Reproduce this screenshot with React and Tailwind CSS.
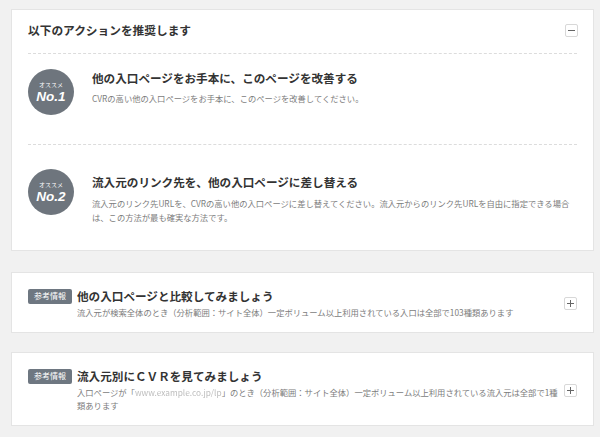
import React from "react";

const jp = { fontFamily: '"Noto Sans CJK JP", "Noto Sans", sans-serif' };

function Toggle({ sign }) {
  return (
    <div className="w-[13px] h-[13px] border border-[#d8d8d8] rounded-[2px] bg-white flex items-center justify-center shrink-0">
      {sign === "minus" ? (
        <div className="w-[7px] h-[1px] bg-[#666]" />
      ) : (
        <div className="relative w-[7px] h-[7px]">
          <div className="absolute left-0 top-[3px] w-[7px] h-[1px] bg-[#666]" />
          <div className="absolute top-0 left-[3px] h-[7px] w-[1px] bg-[#666]" />
        </div>
      )}
    </div>
  );
}

function Circle({ n }) {
  return (
    <div className="w-[46px] h-[46px] rounded-full bg-[#6e757d] flex flex-col items-center justify-center shrink-0 text-white">
      <div className="text-[6px] leading-[7px] mt-[1px]" style={jp}>オススメ</div>
      <div
        className="text-[13.5px] leading-[15px] font-bold italic mt-[1px]"
        style={{ fontFamily: '"Liberation Sans", Arial, sans-serif' }}
      >
        No.{n}
      </div>
    </div>
  );
}

function Badge() {
  return (
    <div className="h-[15px] w-[44px] rounded-[2px] bg-[#6e7781] text-white text-[8px] flex items-center justify-center shrink-0">
      参考情報
    </div>
  );
}

export default function App() {
  return (
    <div className="w-[600px] h-[437px] bg-[#f1f1f1] pt-[9px] pl-[11px] overflow-hidden" style={jp}>
      {/* Card 1 */}
      <div className="w-[583px] h-[242px] bg-white border border-[#e4e4e4] pl-[16px] pr-[16px]">
        <div className="flex items-center justify-between pt-[11px] pb-[14px] border-b border-dashed border-[#dcdcdc]">
          <div className="text-[11.7px] leading-[18px] font-bold text-[#333]">以下のアクションを推奨します</div>
          <div className="mr-[-1px]">
            <Toggle sign="minus" />
          </div>
        </div>
        <div className="flex items-start pt-[15px] h-[91px] border-b border-dashed border-[#dcdcdc]">
          <Circle n={1} />
          <div className="ml-[18px] pt-[1px]">
            <div className="text-[11.6px] leading-[16px] font-bold text-[#333]">
              他の入口ページをお手本に、このページを改善する
            </div>
            <div className="text-[8.3px] leading-[14px] text-[#7c7c7c] mt-[5px]">
              CVRの高い他の入口ページをお手本に、このページを改善してください。
            </div>
          </div>
        </div>
        <div className="flex items-start pt-[24px]">
          <Circle n={2} />
          <div className="ml-[18px] pt-[5px]">
            <div className="text-[11.6px] leading-[16px] font-bold text-[#333]">
              流入元のリンク先を、他の入口ページに差し替える
            </div>
            <div className="text-[8.3px] leading-[14px] text-[#7c7c7c] mt-[6px]">
              流入元のリンク先URLを、CVRの高い他の入口ページに差し替えてください。流入元からのリンク先URLを自由に指定できる場合
              <br />
              は、この方法が最も確実な方法です。
            </div>
          </div>
        </div>
      </div>

      {/* Card 2 */}
      <div className="w-[583px] h-[61px] mt-[21px] bg-white border border-[#e4e4e4] pl-[16px] pr-[16px] flex items-center">
        <div className="flex-1 flex items-start pt-[1px]">
          <div className="mt-[1px]">
            <Badge />
          </div>
          <div className="ml-[5px]">
            <div className="text-[11.6px] leading-[16px] font-bold text-[#333]">他の入口ページと比較してみましょう</div>
            <div className="text-[8.3px] leading-[13px] text-[#7c7c7c] mt-[2px]">
              流入元が検索全体のとき（分析範囲：サイト全体）一定ボリューム以上利用されている入口は全部で103種類あります
            </div>
          </div>
        </div>
        <div className="mt-[1px]">
          <Toggle sign="plus" />
        </div>
      </div>

      {/* Card 3 */}
      <div className="w-[583px] h-[74px] mt-[19px] bg-white border border-[#e4e4e4] pl-[16px] pr-[16px] flex items-center">
        <div className="flex-1 flex items-start pt-[1px]">
          <div className="mt-[1px]">
            <Badge />
          </div>
          <div className="ml-[5px]">
            <div className="text-[11.6px] leading-[16px] font-bold text-[#333]">流入元別にＣＶＲを見てみましょう</div>
            <div className="text-[8.3px] leading-[13px] text-[#7c7c7c] mt-[2px]">
              入口ページが「<span className="text-[#bdbdbd] blur-[0.6px]">www.example.co.jp/lp</span>」のとき（分析範囲：サイト全体）一定ボリューム以上利用されている流入元は全部で1種
              <br />
              類あります
            </div>
          </div>
        </div>
        <div className="mt-[3px]">
          <Toggle sign="plus" />
        </div>
      </div>
    </div>
  );
}
